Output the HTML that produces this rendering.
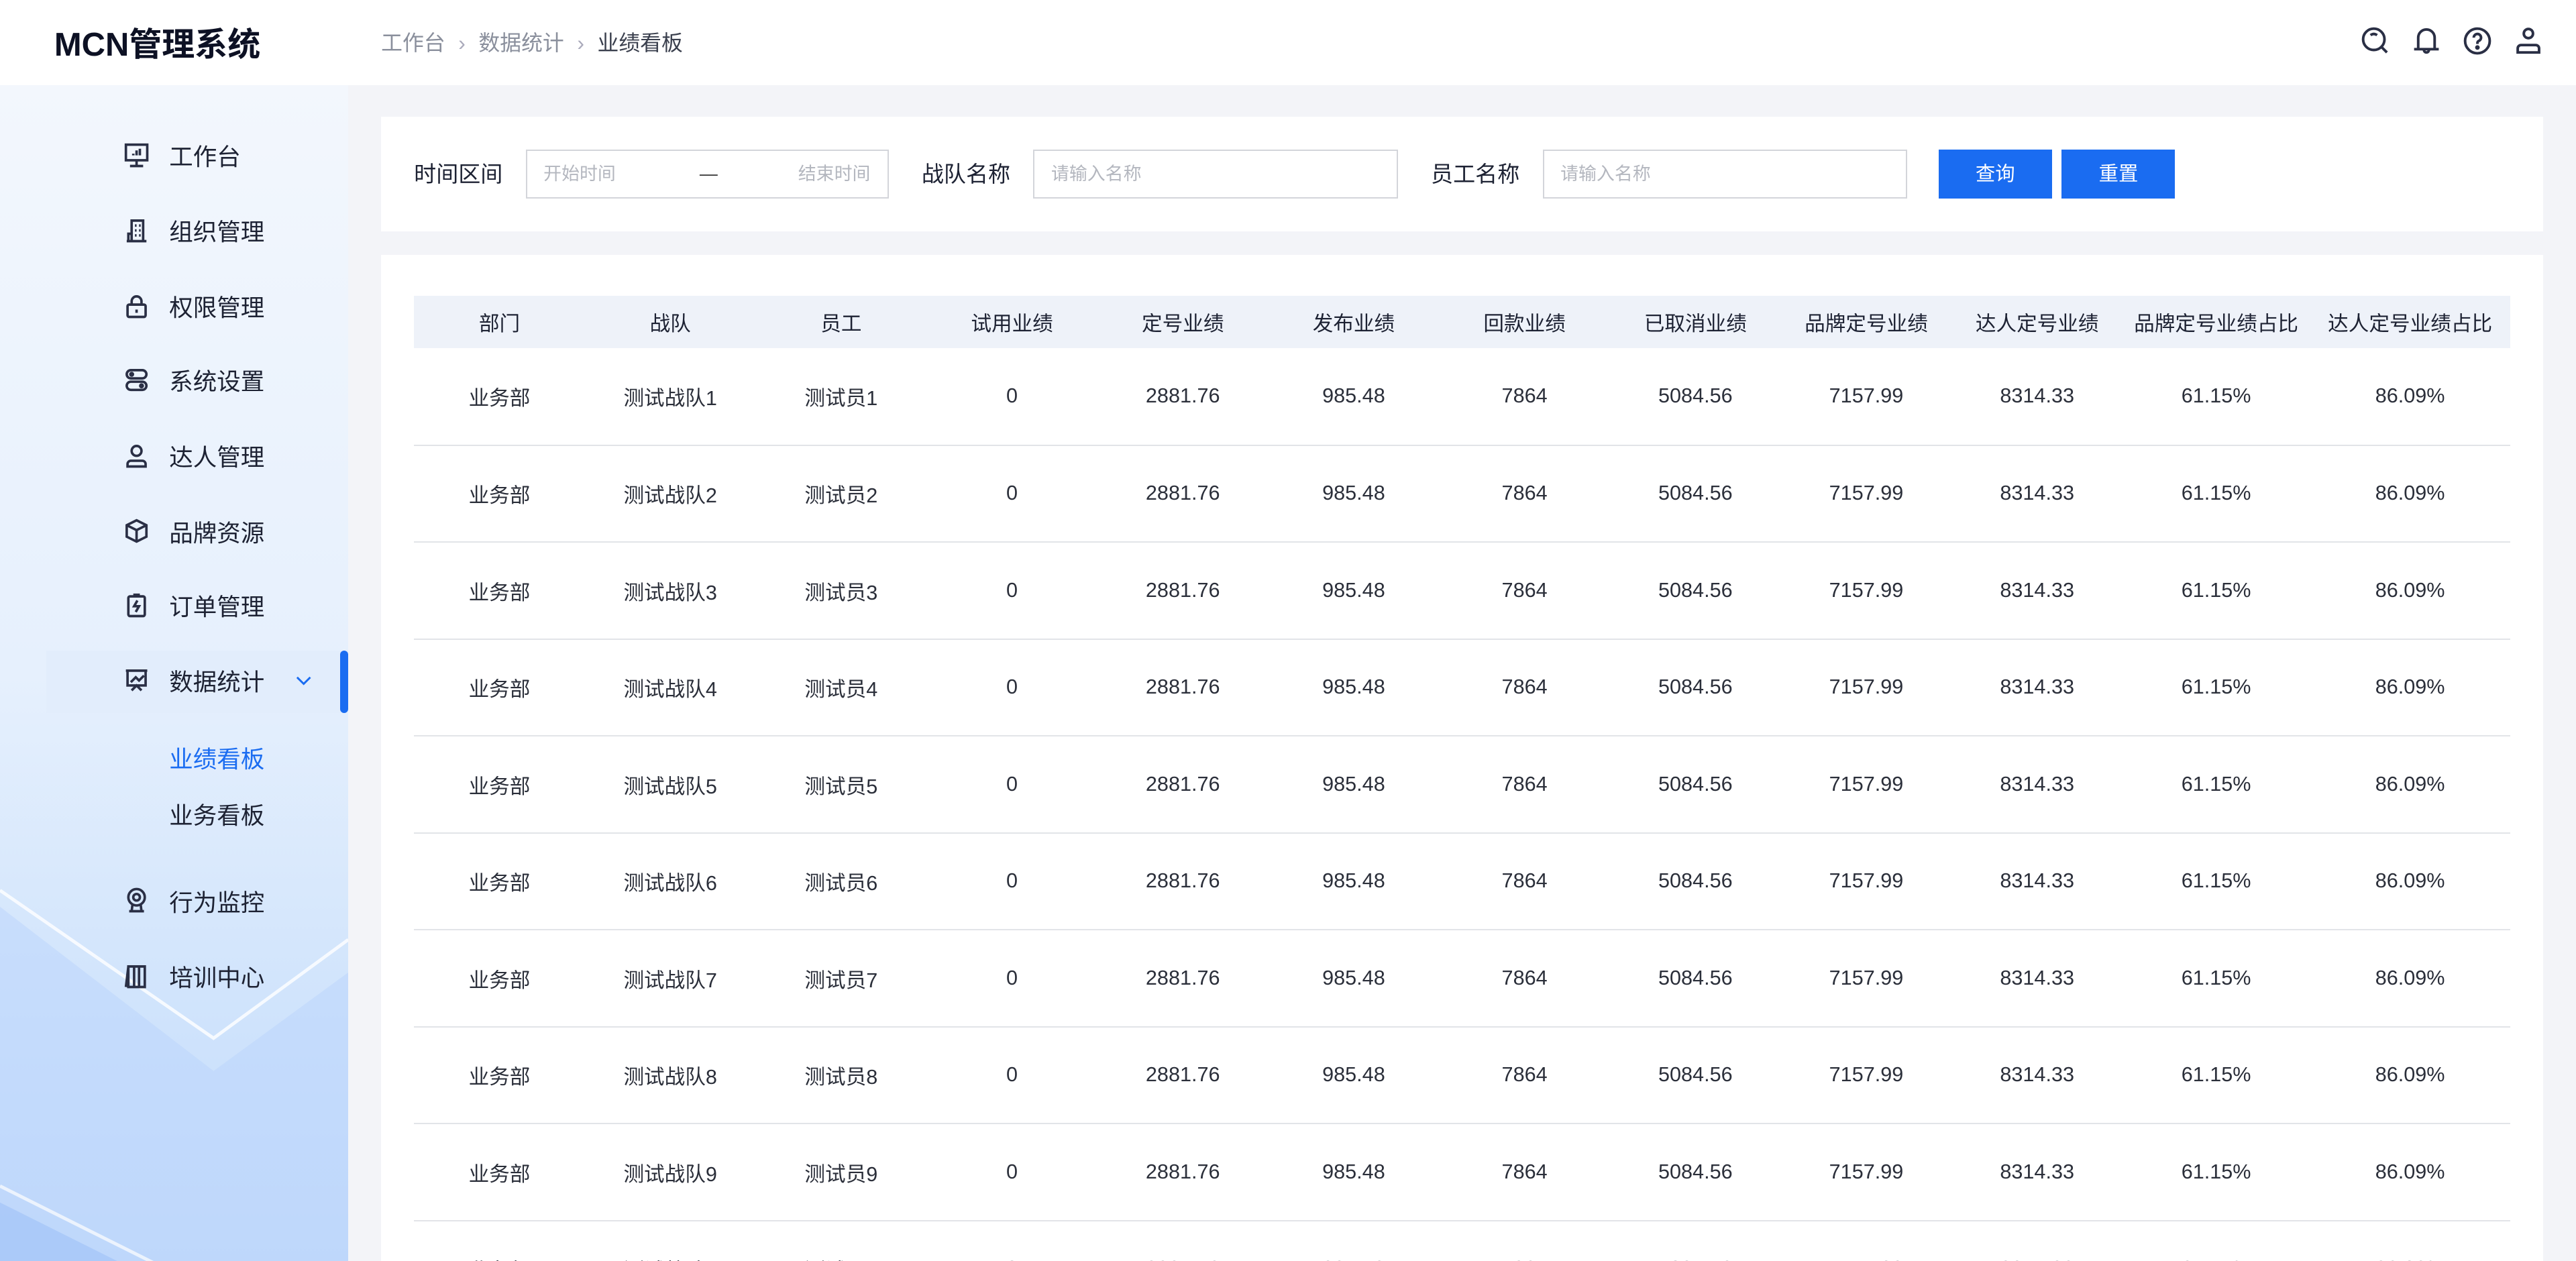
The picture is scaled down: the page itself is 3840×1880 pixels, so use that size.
<!DOCTYPE html>
<html><head><meta charset="utf-8"><style>
*{margin:0;padding:0;box-sizing:border-box}
html,body{width:3840px;height:1880px;overflow:hidden;background:#f3f4f8}
#r{zoom:2.44898;width:1568px;height:768px;position:relative;font-family:"Liberation Sans","Noto Sans CJK SC",sans-serif;color:#1d2233;overflow:hidden}
.hd{position:absolute;left:0;top:0;width:1568px;height:52px;background:#fff}
.logo{position:absolute;left:33px;top:11px;font-size:20px;font-weight:bold;color:#0d1124}
.bc{position:absolute;left:232px;top:16px;font-size:13px;color:#8a8f9c}
.bc b{font-weight:normal;color:#3a3f4d}
.bc i{font-style:normal;margin:0 8px;color:#aab}
.ic{position:absolute;top:16px}
.sb{position:absolute;left:0;top:52px;width:212px;height:716px;background:linear-gradient(180deg,#f3f7fd 0%,#e6f0fd 50%,#cfe3fc 80%,#c3dbfb 100%);overflow:hidden}
.it{position:absolute;left:75px;font-size:14.5px;color:#1d2233;display:flex;align-items:center}
.it svg{margin-right:12px}
.sub{position:absolute;left:103px;font-size:14.5px}
.card{position:absolute;background:#fff}
.lb{position:absolute;top:95px;font-size:13.5px;color:#1d2233}
.inp{position:absolute;top:91px;height:30px;border:1px solid #d3d5da;font-size:11px;color:#b4b7bf;line-height:28px;padding-left:10px}
.btn{position:absolute;top:91px;height:30px;width:69px;background:#1a6cf1;color:#fff;font-size:12px;text-align:center;line-height:30px}
table{position:absolute;left:252px;top:180px;width:1276px;border-collapse:collapse;font-size:12.5px;color:#2b2f3a;table-layout:fixed}
th{height:32px;background:#eef2f9;font-weight:normal;color:#1d2233;font-size:12.5px}
td{height:59px;text-align:center;border-bottom:1px solid #e2e4e8}
th,td{text-align:center;white-space:nowrap}
</style></head><body><div id="r">
<div class="hd">
<div class="logo">MCN管理系统</div>
<div class="bc">工作台<i>›</i>数据统计<i>›</i><b>业绩看板</b></div>
<svg class="ic" style="left:1437px" width="18" height="18" viewBox="0 0 18 18" fill="none" stroke="#2a2f45" stroke-width="1.6"><circle cx="8" cy="8" r="6.5"/><path d="M12.5 12.5L16 16M6 5.5q2-1.5 4 0"/></svg>
<svg class="ic" style="left:1468px" width="18" height="18" viewBox="0 0 18 18" fill="none" stroke="#2a2f45" stroke-width="1.6"><path d="M4 14V7a5 5 0 0 1 10 0v7M1.5 14h15M7.5 14.5a1.5 1.5 0 0 0 3 0"/></svg>
<svg class="ic" style="left:1499px" width="18" height="18" viewBox="0 0 18 18" fill="none" stroke="#2a2f45" stroke-width="1.6"><circle cx="9" cy="9" r="7.5"/><path d="M6.8 7a2.2 2.2 0 1 1 3 2c-.8.4-.8.9-.8 1.8"/><circle cx="9" cy="13" r=".6" fill="#2a2f45"/></svg>
<svg class="ic" style="left:1530px" width="18" height="18" viewBox="0 0 18 18" fill="none" stroke="#2a2f45" stroke-width="1.6"><circle cx="9" cy="4.5" r="2.8"/><path d="M2.5 16v-2.5a2 2 0 0 1 2-2h9a2 2 0 0 1 2 2V16z"/></svg>
</div>
<div class="sb">
<svg style="position:absolute;left:0;top:400px" width="212" height="320" viewBox="0 0 212 320"><path d="M0 100L130 200L212 140V320H0z" fill="#b9d4fb" opacity=".5"/><path d="M0 90L130 180L212 120" stroke="#fff" stroke-width="2" fill="none" opacity=".8"/><path d="M0 270L100 320" stroke="#fff" stroke-width="2" opacity=".7"/><path d="M0 280L80 320H0z" fill="#9ec2f8" opacity=".6"/></svg>
<div style="position:absolute;left:28px;top:344px;width:184px;height:38px;background:#e2edfc"></div>
<div style="position:absolute;left:207px;top:344px;width:5px;height:38px;background:#1a6cf1;border-radius:3px"></div>
</div>
<div class="it" style="top:84px"><svg width="16" height="16" viewBox="0 0 16 16" fill="none" stroke="#2a2f45" stroke-width="1.5"><rect x="1.5" y="1.5" width="13" height="9.5"/><path d="M8 11v3M4 14.5h8M6 8V7M8 8V5M10 8V4"/></svg>工作台</div>
<div class="it" style="top:130px"><svg width="16" height="16" viewBox="0 0 16 16" fill="none" stroke="#2a2f45" stroke-width="1.5"><path d="M5 14.5V2h7v12.5M2 14.5h12M3 14.5V10h2M7 5h1M9.5 5h1M7 8h1M9.5 8h1M7 11h1M9.5 11h1"/></svg>组织管理</div>
<div class="it" style="top:176px"><svg width="16" height="16" viewBox="0 0 16 16" fill="none" stroke="#2a2f45" stroke-width="1.5"><rect x="2.5" y="7" width="11" height="7.5" rx="1"/><path d="M5 7V5a3 3 0 0 1 6 0v2M8 10v2"/></svg>权限管理</div>
<div class="it" style="top:221px"><svg width="16" height="16" viewBox="0 0 16 16" fill="none" stroke="#2a2f45" stroke-width="1.5"><rect x="2" y="2" width="12" height="5" rx="2.5"/><rect x="2" y="9" width="12" height="5" rx="2.5"/><circle cx="5" cy="4.5" r=".8"/><circle cx="11" cy="11.5" r=".8"/></svg>系统设置</div>
<div class="it" style="top:267px"><svg width="16" height="16" viewBox="0 0 16 16" fill="none" stroke="#2a2f45" stroke-width="1.5"><circle cx="8" cy="5" r="3"/><path d="M2.5 14.5v-1.5a2 2 0 0 1 2-2h7a2 2 0 0 1 2 2v1.5z"/></svg>达人管理</div>
<div class="it" style="top:313px"><svg width="16" height="16" viewBox="0 0 16 16" fill="none" stroke="#2a2f45" stroke-width="1.5"><path d="M8 1.5l6 3v7l-6 3-6-3v-7zM2 4.5l6 3 6-3M8 7.5v7"/></svg>品牌资源</div>
<div class="it" style="top:358px"><svg width="16" height="16" viewBox="0 0 16 16" fill="none" stroke="#2a2f45" stroke-width="1.5"><rect x="3" y="2.5" width="10" height="12" rx="1"/><path d="M6 1.5h4M8.5 5L6.5 8.5h3L7.5 12"/></svg>订单管理</div>
<div class="it" style="top:404px"><svg width="16" height="16" viewBox="0 0 16 16" fill="none" stroke="#2a2f45" stroke-width="1.5"><path d="M1.5 2h13M2.5 2v9h11V2M4.5 9l3-3 2 2 3-3M5 14l3-3 3 3"/></svg>数据统计<svg style="margin-left:18px" width="12" height="12" viewBox="0 0 12 12" fill="none" stroke="#1a6cf1" stroke-width="1.2"><path d="M2 4l4 4 4-4"/></svg></div>
<div class="sub" style="top:451px;color:#1a6cf1">业绩看板</div>
<div class="sub" style="top:485px">业务看板</div>
<div class="it" style="top:538px"><svg width="16" height="16" viewBox="0 0 16 16" fill="none" stroke="#2a2f45" stroke-width="1.5"><circle cx="8" cy="6" r="5"/><circle cx="8" cy="6" r="2"/><path d="M5.5 10.5L5 14.5h6l-.5-4M3.5 14.5h9"/></svg>行为监控</div>
<div class="it" style="top:584px"><svg width="16" height="16" viewBox="0 0 16 16" fill="none" stroke="#2a2f45" stroke-width="1.5"><path d="M3 2h10v12.5H3zM6.5 2v12.5M9.5 2v12.5M3 2L1.5 14.5"/></svg>培训中心</div>
<div class="card" style="left:232px;top:71px;width:1316px;height:70px"></div>
<div class="lb" style="left:252px">时间区间</div>
<div class="inp" style="left:320px;width:221px">开始时间<span style="position:absolute;left:105px;color:#333">—</span><span style="position:absolute;left:165px">结束时间</span></div>
<div class="lb" style="left:561px">战队名称</div>
<div class="inp" style="left:629px;width:222px">请输入名称</div>
<div class="lb" style="left:871px">员工名称</div>
<div class="inp" style="left:939px;width:222px">请输入名称</div>
<div class="btn" style="left:1180px">查询</div>
<div class="btn" style="left:1255px">重置</div>
<div class="card" style="left:232px;top:155px;width:1316px;height:613px"></div>
<table>
<colgroup><col style="width:104px"><col style="width:104px"><col style="width:104px"><col style="width:104px"><col style="width:104px"><col style="width:104px"><col style="width:104px"><col style="width:104px"><col style="width:104px"><col style="width:104px"><col style="width:114px"><col style="width:122px"></colgroup>
<tr><th>部门</th><th>战队</th><th>员工</th><th>试用业绩</th><th>定号业绩</th><th>发布业绩</th><th>回款业绩</th><th>已取消业绩</th><th>品牌定号业绩</th><th>达人定号业绩</th><th>品牌定号业绩占比</th><th>达人定号业绩占比</th></tr>
<tr><td>业务部</td><td>测试战队1</td><td>测试员1</td><td>0</td><td>2881.76</td><td>985.48</td><td>7864</td><td>5084.56</td><td>7157.99</td><td>8314.33</td><td>61.15%</td><td>86.09%</td></tr>
<tr><td>业务部</td><td>测试战队2</td><td>测试员2</td><td>0</td><td>2881.76</td><td>985.48</td><td>7864</td><td>5084.56</td><td>7157.99</td><td>8314.33</td><td>61.15%</td><td>86.09%</td></tr>
<tr><td>业务部</td><td>测试战队3</td><td>测试员3</td><td>0</td><td>2881.76</td><td>985.48</td><td>7864</td><td>5084.56</td><td>7157.99</td><td>8314.33</td><td>61.15%</td><td>86.09%</td></tr>
<tr><td>业务部</td><td>测试战队4</td><td>测试员4</td><td>0</td><td>2881.76</td><td>985.48</td><td>7864</td><td>5084.56</td><td>7157.99</td><td>8314.33</td><td>61.15%</td><td>86.09%</td></tr>
<tr><td>业务部</td><td>测试战队5</td><td>测试员5</td><td>0</td><td>2881.76</td><td>985.48</td><td>7864</td><td>5084.56</td><td>7157.99</td><td>8314.33</td><td>61.15%</td><td>86.09%</td></tr>
<tr><td>业务部</td><td>测试战队6</td><td>测试员6</td><td>0</td><td>2881.76</td><td>985.48</td><td>7864</td><td>5084.56</td><td>7157.99</td><td>8314.33</td><td>61.15%</td><td>86.09%</td></tr>
<tr><td>业务部</td><td>测试战队7</td><td>测试员7</td><td>0</td><td>2881.76</td><td>985.48</td><td>7864</td><td>5084.56</td><td>7157.99</td><td>8314.33</td><td>61.15%</td><td>86.09%</td></tr>
<tr><td>业务部</td><td>测试战队8</td><td>测试员8</td><td>0</td><td>2881.76</td><td>985.48</td><td>7864</td><td>5084.56</td><td>7157.99</td><td>8314.33</td><td>61.15%</td><td>86.09%</td></tr>
<tr><td>业务部</td><td>测试战队9</td><td>测试员9</td><td>0</td><td>2881.76</td><td>985.48</td><td>7864</td><td>5084.56</td><td>7157.99</td><td>8314.33</td><td>61.15%</td><td>86.09%</td></tr>
<tr><td>业务部</td><td>测试战队1</td><td>测试员1</td><td>0</td><td>2881.76</td><td>985.48</td><td>7864</td><td>5084.56</td><td>7157.99</td><td>8314.33</td><td>61.15%</td><td>86.09%</td></tr>
</table>
</div></body></html>
